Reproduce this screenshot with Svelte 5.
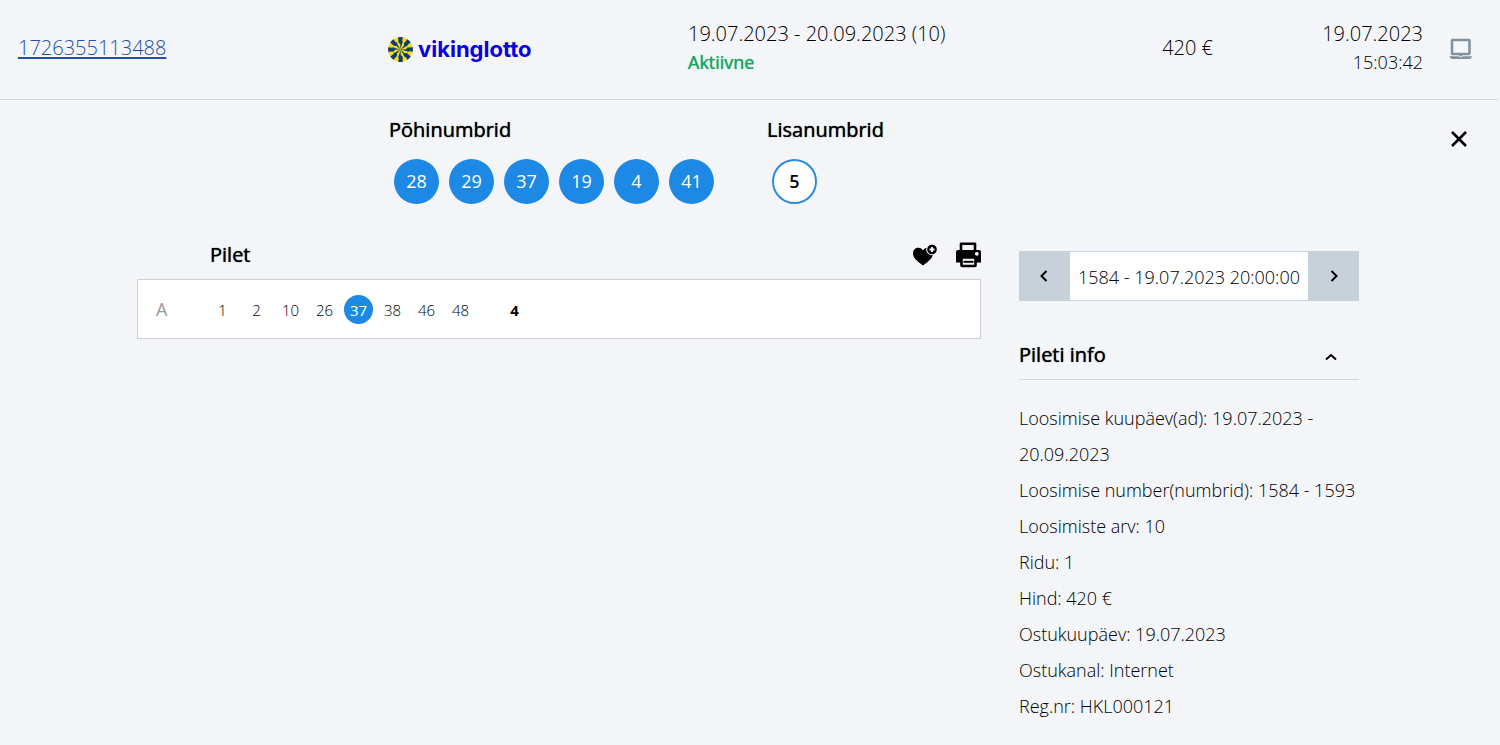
<script>
  const mainNumbers = [28, 29, 37, 19, 4, 41];
  const extraNumbers = [5];
  const rows = [{ label: 'A', main: [1, 2, 10, 26, 37, 38, 46, 48], extra: [4] }];
  const info = [
    'Loosimise kuupäev(ad): 19.07.2023 - 20.09.2023',
    'Loosimise number(numbrid): 1584 - 1593',
    'Loosimiste arv: 10',
    'Ridu: 1',
    'Hind: 420 €',
    'Ostukuupäev: 19.07.2023',
    'Ostukanal: Internet',
    'Reg.nr: HKL000121'
  ];
  const blades = [0, 45, 90, 135, 180, 225, 270, 315];
  let infoOpen = $state(true);
</script>

<main>
  <header>
    <div><a href="#ticket">1726355113488</a></div>
    <div class="logo">
      <svg width="26" height="26" viewBox="0 0 26 26" aria-hidden="true">
        <circle cx="12.5" cy="13.5" r="12.4" fill="#f4dc2c" />
        {#each blades as angle}
          <path
            transform="rotate({angle} 12.5 13.5)"
            fill="#0f4068"
            d="M12.500 13.500L12.200 8L10.400 6.600L10.200 1.300Q12.400 0.800 14.800 1.300L14.200 4.600L14.800 6L13.800 8.500Z"
          />
        {/each}
      </svg>
      <span>vikinglotto</span>
    </div>
    <div class="period">
      <div>19.07.2023 - 20.09.2023 (10)</div>
      <div class="status">Aktiivne</div>
    </div>
    <div class="price">420 €</div>
    <div class="bought">
      <div>19.07.2023</div>
      <div class="time">15:03:42</div>
    </div>
    <svg class="channel" width="24" height="24" viewBox="0 0 24 24" role="img" aria-label="Internet">
      <rect x="3" y="4" width="17.500" height="14" rx="0.5" fill="none" stroke="#84909a" stroke-width="2.6" />
      <path d="M10 18h3.500l-.7 2.400h-2.100z" fill="#84909a" />
      <path d="M0.500 20.300h9l1 1h2.500l1-1h9q-.3 2.700-2.500 2.700h-17.500q-2.200 0-2.500-2.700z" fill="#84909a" />
    </svg>
  </header>

  <section class="drawn">
    <div class="group">
      <h2>Põhinumbrid</h2>
      <div class="balls">
        {#each mainNumbers as n}<span class="ball">{n}</span>{/each}
      </div>
    </div>
    <div class="group">
      <h2>Lisanumbrid</h2>
      <div class="balls">
        {#each extraNumbers as n}<span class="ball extra">{n}</span>{/each}
      </div>
    </div>
    <button class="close" aria-label="Sulge">
      <svg width="18" height="18" viewBox="0 0 18 18"><path d="M2 2L16 16M16 2L2 16" stroke="#000" stroke-width="2.6" /></svg>
    </button>
  </section>

  <div class="content">
    <section class="ticket" id="ticket">
      <div class="ticket-head">
        <h2>Pilet</h2>
        <div class="tools">
          <button aria-label="Lisa lemmikutesse">
            <svg width="26" height="26" viewBox="0 0 26 26">
              <path d="M12 23.500C7.500 20 2 16.500 2 11.200C2 5.500 9 3.800 12 8.200C15 3.800 22 5.500 22 11.200C22 16.500 16.500 20 12 23.500z" fill="#000" />
              <circle cx="21" cy="7.500" r="5.800" fill="#f3f5f9" />
              <circle cx="21" cy="7.500" r="4.800" fill="#000" />
              <path d="M21 5v5M18.500 7.500h5" stroke="#fff" stroke-width="1.800" />
            </svg>
          </button>
          <button aria-label="Prindi">
            <svg width="26" height="26" viewBox="0 0 26 26">
              <path d="M6 9V1.800H20V9" fill="#f3f5f9" stroke="#000" stroke-width="2.600" stroke-linejoin="round" />
              <path d="M3 8H24Q26 8 26 10V20.500H1V10Q1 8 3 8z" fill="#000" />
              <rect x="6.500" y="15.500" width="14" height="8.500" rx="0.500" fill="#f3f5f9" stroke="#000" stroke-width="2.600" />
              <path d="M8.500 19.800h10" stroke="#000" stroke-width="2" />
              <circle cx="21.800" cy="11.800" r="1.900" fill="#fff" />
            </svg>
          </button>
        </div>
      </div>
      {#each rows as row}
        <div class="row">
          <span class="label">{row.label}</span>
          <div class="cells">
            {#each row.main as n}
              <span class="cell" class:hit={mainNumbers.includes(n)}>{n}</span>
            {/each}
          </div>
          <div class="cells bonus">
            {#each row.extra as n}<span class="cell">{n}</span>{/each}
          </div>
        </div>
      {/each}
    </section>

    <aside>
      <div class="pager">
        <button aria-label="Eelmine">
          <svg width="10" height="14" viewBox="0 0 10 14"><path d="M6.500 2L1.500 7L6.500 12" fill="none" stroke="#000" stroke-width="2" /></svg>
        </button>
        <span>1584 - 19.07.2023 20:00:00</span>
        <button aria-label="Järgmine">
          <svg width="10" height="14" viewBox="0 0 10 14"><path d="M3.500 2L8.500 7L3.500 12" fill="none" stroke="#000" stroke-width="2" /></svg>
        </button>
      </div>
      <button class="info-head" aria-expanded={infoOpen} onclick={() => (infoOpen = !infoOpen)}>
        <span>Pileti info</span>
        <svg width="12" height="12" viewBox="0 0 12 12"><path d="M1 10.500L6 6L11 10.500" fill="none" stroke="#000" stroke-width="2" /></svg>
      </button>
      {#if infoOpen}
        <div class="info">
          {#each info as line}<p>{line}</p>{/each}
        </div>
      {/if}
    </aside>
  </div>
</main>

<style>
  :global(body) {
    margin: 0;
    background: #f3f5f9;
  }
  main {
    margin-right: 2px;
    color: #000;
    font: 300 20px/28px 'Open Sans', 'Noto Sans', sans-serif;
  }
  h2,
  p {
    margin: 0;
  }
  h2 {
    font-size: 20px;
    font-weight: 500;
    line-height: 28px;
  }
  h2,
  .status,
  .info-head span {
    text-shadow: 0 0 1px currentColor;
  }
  button {
    display: flex;
    align-items: center;
    justify-content: center;
    padding: 0;
    border: 0;
    background: none;
    color: inherit;
    font: inherit;
    cursor: pointer;
  }
  svg {
    display: block;
  }
  header {
    display: grid;
    grid-template-columns: 370fr 300fr 270fr 255fr 210fr 50px;
    align-items: center;
    padding: 20px 25px 23px 18px;
    border-bottom: 1px solid #d3d7dc;
  }
  header a {
    color: #244fa8;
    text-decoration-thickness: 2px;
    text-underline-offset: 2px;
  }
  .logo {
    display: flex;
    align-items: center;
    gap: 4px;
    padding-top: 2px;
    color: #0a00e0;
    font: 700 22px/26px Inter, sans-serif;
  }
  .period {
    white-space: nowrap;
  }
  .status,
  .time {
    font-size: 18px;
  }
  .status {
    color: #1ba462;
    font-weight: 500;
  }
  .price,
  .bought {
    text-align: right;
  }
  .channel {
    justify-self: end;
  }
  .drawn {
    display: flex;
    padding: 16px 30px 0 389px;
    gap: 48px;
  }
  .balls {
    display: flex;
    gap: 10px;
    padding: 15px 5px 0;
  }
  .ball {
    box-sizing: border-box;
    width: 45px;
    height: 45px;
    border-radius: 50%;
    background: #1e88e5;
    color: #fff;
    font-size: 18px;
    font-weight: 500;
    line-height: 45px;
    text-align: center;
  }
  .ball.extra {
    border: 2px solid #2e8bdb;
    background: #fff;
    color: #000;
    font-weight: 600;
    line-height: 41px;
  }
  .close {
    align-self: flex-start;
    margin: 14px 0 0 auto;
  }
  .content {
    display: grid;
    grid-template-columns: 1fr 340px;
    gap: 38px;
    max-width: 1222px;
    margin: 0 auto;
    padding: 36px 2px 20px 0;
  }
  .ticket-head {
    display: flex;
    align-items: center;
    justify-content: space-between;
    padding: 1px 0 10px 73px;
  }
  .tools {
    display: flex;
    gap: 18px;
  }
  .row {
    display: flex;
    align-items: center;
    height: 58px;
    border: 1px solid #ccd0d4;
    background: #fff;
  }
  .label {
    width: 70px;
    padding-left: 18px;
    box-sizing: border-box;
    color: #999;
    font-size: 18px;
    font-weight: 400;
  }
  .cells {
    display: flex;
    gap: 5px;
  }
  .cell {
    width: 29px;
    height: 29px;
    border-radius: 50%;
    font-size: 15px;
    line-height: 31px;
    text-align: center;
  }
  .cell.hit {
    background: #1e88e5;
    color: #fff;
    font-weight: 400;
  }
  .bonus {
    margin-left: 25px;
    font-weight: 700;
  }
  aside {
    padding-top: 11px;
    font-size: 18px;
  }
  .pager {
    display: flex;
    height: 48px;
    border: 1px solid #c8d1d9;
    background: #fff;
  }
  .pager button {
    flex: 0 0 50px;
    background: #c8d1d9;
  }
  .pager span {
    flex: 1;
    line-height: 50px;
    text-align: center;
    white-space: nowrap;
  }
  .info-head {
    justify-content: space-between;
    width: 100%;
    margin-top: 40px;
    padding: 0 22px 10px 0;
    border-bottom: 1px solid #d3d7dc;
    font-size: 20px;
    font-weight: 500;
  }
  .info {
    padding-top: 20px;
    line-height: 36px;
  }
</style>
